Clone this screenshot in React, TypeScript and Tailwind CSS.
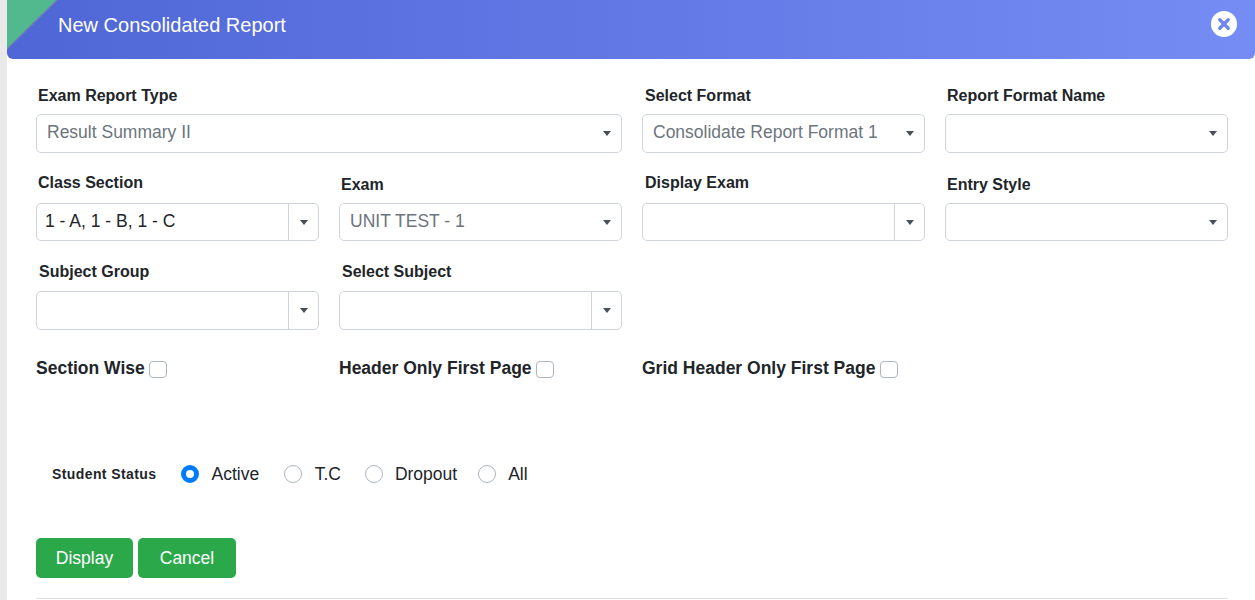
import React from 'react';

interface FieldProps {
  label: string;
  labelClass: string;
  value?: string;
  dark?: boolean;
  split?: boolean;
  wide?: boolean;
  inputClass?: string;
}

function Caret() {
  return <span className="w-0 h-0 border-x-[4px] border-x-transparent border-t-[5px] border-t-[#495057]"></span>;
}

function Field({ label, labelClass, value, dark, split, wide, inputClass = 'h-[39px]' }: FieldProps) {
  return (
    <div className={wide ? 'col-span-2' : ''}>
      <div className={`h-[30px] text-[16px] font-bold text-[#212529] ${labelClass}`}>{label}</div>
      <div className={`flex items-center bg-white border border-[#ced4da] rounded-[5px] ${inputClass}`}>
        <div className={`flex-1 truncate text-[17.5px] pb-[2px] ${dark ? 'text-[#212529] pl-[8px]' : 'text-[#6c757d] pl-[10px]'}`}>{value}</div>
        <div className={`w-[30px] h-full flex items-center justify-center ${split ? 'border-l border-[#ced4da]' : 'pl-[2px]'}`}>
          <Caret />
        </div>
      </div>
    </div>
  );
}

function Check({ label }: { label: string }) {
  return (
    <div className="flex items-center gap-[4.5px] text-[17.5px] font-bold text-[#212529]">
      <span>{label}</span>
      <span className="w-[18px] h-[17px] mt-[2px] bg-white border border-[#adb5bd] rounded-[4px]"></span>
    </div>
  );
}

function Radio({ label, on, className }: { label: string; on?: boolean; className: string }) {
  return (
    <div className={`flex items-center text-[17.5px] text-[#212529] ${className}`}>
      {on ? (
        <span className="w-[18px] h-[18px] rounded-full border-[5.5px] border-[#007bff] bg-white"></span>
      ) : (
        <span className="w-[18px] h-[18px] rounded-full border border-[#adb5bd] bg-white"></span>
      )}
      <span>{label}</span>
    </div>
  );
}

export default function App() {
  return (
    <div className="h-[600px] overflow-hidden bg-[#e9e9e9] pl-[7px] font-['Liberation_Sans',Arial,sans-serif]">
      <div className="h-[600px] bg-white">
        {/* Header */}
        <div className="relative h-[59px] flex items-center justify-between rounded-b-[6px] overflow-hidden bg-gradient-to-r from-[#4f66d6] to-[#758cf4] pl-[51px] pr-[18px]">
          <div className="absolute left-0 top-0 w-[51px] h-[50px] bg-[#6f7fb4] [clip-path:polygon(0_0,100%_0,0_100%)]"></div>
          <div className="absolute left-0 top-0 w-[49px] h-[48px] bg-[#52b98f] [clip-path:polygon(0_0,100%_0,0_100%)]"></div>
          <h1 className="text-[20px] text-white pb-[10px]">New Consolidated Report</h1>
          <svg width="26" height="26" viewBox="0 0 26 26" className="mb-[11px]">
            <circle cx="13" cy="13" r="13" fill="#fff" />
            <path d="M8.8 8.8 L17.2 17.2 M17.2 8.8 L8.8 17.2" stroke="#6f86ef" strokeWidth="3.4" strokeLinecap="round" />
          </svg>
        </div>

        <div className="pl-[29px] pr-[27px] pt-[25px]">
          {/* Form fields */}
          <div className="grid grid-cols-4 gap-x-[20px] gap-y-[20px]">
            <Field wide label="Exam Report Type" labelClass="pl-[2px] leading-[24px]" value="Result Summary II" />
            <Field label="Select Format" labelClass="pl-[3px] leading-[24px]" value="Consolidate Report Format 1" />
            <Field label="Report Format Name" labelClass="pl-[2px] leading-[24px]" />

            <Field split dark label="Class Section" labelClass="pl-[2px] leading-[20px]" value="1 - A, 1 - B, 1 - C" inputClass="h-[38px]" />
            <Field label="Exam" labelClass="pl-[2px] leading-[24px]" value="UNIT TEST - 1" inputClass="h-[38px]" />
            <Field split label="Display Exam" labelClass="pl-[3px] leading-[20px]" inputClass="h-[38px]" />
            <Field label="Entry Style" labelClass="pl-[2px] leading-[24px]" inputClass="h-[38px]" />

            <Field split label="Subject Group" labelClass="pl-[3px] leading-[22px]" />
            <Field split label="Select Subject" labelClass="pl-[3px] leading-[22px]" />
          </div>

          {/* Checkboxes */}
          <div className="grid grid-cols-4 gap-x-[20px] mt-[25px]">
            <Check label="Section Wise" />
            <Check label="Header Only First Page" />
            <div className="col-span-2">
              <Check label="Grid Header Only First Page" />
            </div>
          </div>

          {/* Student status */}
          <div className="flex items-center h-[24px] mt-[81px] pl-[16px]">
            <span className="w-[129px] text-[14px] font-bold tracking-[0.4px] text-[#212529]">Student Status</span>
            <Radio on label="Active" className="gap-[12.5px] mr-[24.5px]" />
            <Radio label="T.C" className="gap-[13px] mr-[24px]" />
            <Radio label="Dropout" className="gap-[12px] mr-[21px]" />
            <Radio label="All" className="gap-[12px]" />
          </div>

          {/* Buttons */}
          <div className="flex gap-[5px] mt-[52px]">
            <button className="w-[97px] h-[40px] bg-[#2ba84a] text-white text-[17.5px] rounded-[5px]">Display</button>
            <button className="w-[98px] h-[40px] bg-[#2ba84a] text-white text-[17.5px] rounded-[5px]">Cancel</button>
          </div>

          <hr className="mt-[20px] border-t border-[#dee2e6]" />
        </div>
      </div>
    </div>
  );
}
